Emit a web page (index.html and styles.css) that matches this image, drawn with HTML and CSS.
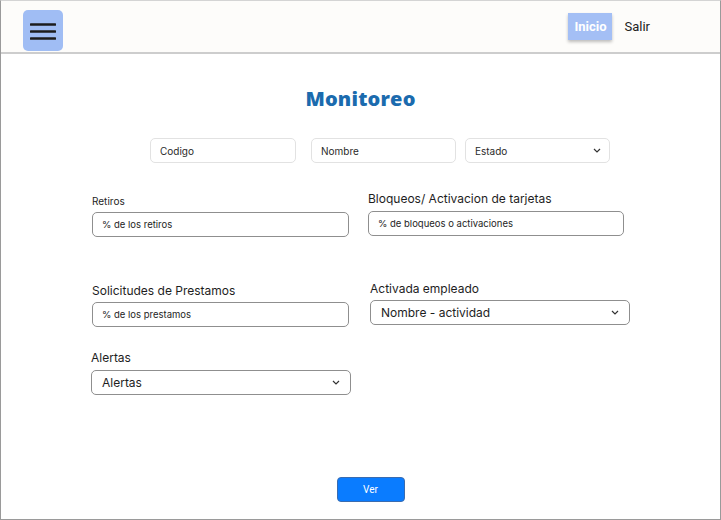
FILE: index.html
```html
<!DOCTYPE html>
<html lang="es">
<head>
<meta charset="utf-8">
<title>Monitoreo</title>
<link rel="stylesheet" href="styles.css">
</head>
<body>
<div class="frame">
  <header class="topbar">
    <button class="menu-btn" aria-label="Menú">
      <svg width="26" height="18" viewBox="0 0 26 18"><path d="M1 2.5h24M1 9.5h24M1 16.5h24" stroke="#1c1c1c" stroke-width="2.6" stroke-linecap="round"/></svg>
    </button>
    <nav class="nav">
      <a class="nav-active">Inicio</a>
      <a class="nav-link">Salir</a>
    </nav>
  </header>

  <main class="content">
    <h1 class="title">Monitoreo</h1>

    <div class="filters">
      <input class="filter f-codigo" placeholder="Codigo">
      <input class="filter f-nombre" placeholder="Nombre">
      <div class="filter f-estado"><span>Estado</span>
        <svg class="chev" width="8" height="5" viewBox="0 0 8 5"><path d="M1 1l3 3 3-3" fill="none" stroke="#333" stroke-width="1.2"/></svg>
      </div>
    </div>

    <div class="grid">
      <div class="field g-retiros">
        <label class="lbl small">Retiros</label>
        <input class="box" placeholder="% de los retiros">
      </div>
      <div class="field g-bloqueos">
        <label class="lbl">Bloqueos/ Activacion de tarjetas</label>
        <input class="box" placeholder="% de bloqueos o activaciones">
      </div>
      <div class="field g-prest">
        <label class="lbl">Solicitudes de Prestamos</label>
        <input class="box" placeholder="% de los prestamos">
      </div>
      <div class="field g-activ">
        <label class="lbl">Activada empleado</label>
        <div class="box sel"><span>Nombre - actividad</span>
          <svg class="chev" width="8" height="5" viewBox="0 0 8 5"><path d="M1 1l3 3 3-3" fill="none" stroke="#333" stroke-width="1.2"/></svg>
        </div>
      </div>
      <div class="field g-alertas">
        <label class="lbl">Alertas</label>
        <div class="box sel"><span>Alertas</span>
          <svg class="chev" width="8" height="5" viewBox="0 0 8 5"><path d="M1 1l3 3 3-3" fill="none" stroke="#333" stroke-width="1.2"/></svg>
        </div>
      </div>
    </div>

    <div class="actions">
      <button class="ver">Ver</button>
    </div>
  </main>
</div>
</body>
</html>
```

FILE: styles.css
```css
* { box-sizing: border-box; }
html, body { margin: 0; padding: 0; background: #fff; }
body { font-family: Inter, "Noto Sans", sans-serif; color: #1e1e1e; }

.frame {
  width: 721px;
  height: 520px;
  border: 1px solid #9a9a9a;
  border-top-color: #d4d4d4;
  background: #fff;
  display: flex;
  flex-direction: column;
}

.topbar {
  height: 53px;
  flex: none;
  background: #fdfcfa;
  border-bottom: 2px solid #cdcdcd;
  display: flex;
  align-items: flex-start;
  justify-content: space-between;
  padding: 9px 0 0 22px;
}
.menu-btn {
  width: 40px;
  height: 41px;
  border: none;
  border-radius: 5px;
  background: #a0bdf4;
  display: flex;
  align-items: center;
  justify-content: center;
  padding: 0;
}
.nav {
  display: flex;
  align-items: center;
  margin-top: 3px;
  margin-right: 70px;
  gap: 12px;
}
.nav-active {
  width: 44px;
  height: 27px;
  background: #a4bff5;
  color: #fff;
  font-family: Roboto, "Liberation Sans", sans-serif;
  font-weight: 700;
  font-size: 13px;
  display: flex;
  align-items: center;
  justify-content: center;
  box-shadow: 0 2px 3px rgba(0,0,0,0.25);
}
.nav-link {
  font-family: Roboto, "Liberation Sans", sans-serif;
  font-size: 13px;
  color: #222;
}

.content {
  flex: 1;
  display: flex;
  flex-direction: column;
}
.title {
  margin: 33px 0 0 0;
  text-align: center;
  font-family: "Open Sans", sans-serif;
  font-weight: 800;
  font-size: 20px;
  line-height: 24px;
  color: #1b6bae;
  letter-spacing: 0.2px;
}

.filters {
  display: flex;
  margin: 27px 0 0 149px;
}
.filter {
  height: 25px;
  border: 1px solid #e2e2e2;
  border-radius: 5px;
  background: #fff;
  font-family: Inter, sans-serif;
  font-size: 10px;
  color: #2a2a2a;
  padding: 0 9px;
  display: flex;
  align-items: center;
  outline: none;
}
.filter::placeholder { color: #2a2a2a; }
.f-codigo { width: 146px; }
.f-nombre { width: 145px; margin-left: 15px; }
.f-estado { width: 145px; margin-left: 9px; justify-content: space-between; padding-right: 8px; }

.grid {
  display: grid;
  grid-template-columns: 260px 262px;
  column-gap: 17px;
  margin: 0 0 0 90px;
}
.field { display: flex; flex-direction: column; }
.lbl {
  font-size: 12px;
  color: #1e1e1e;
  line-height: 16px;
  margin-bottom: 3px;
}
.lbl.small { font-size: 10px; line-height: 12px; margin-bottom: 5px; }
.box {
  height: 25px;
  border: 1px solid #8f8f8f;
  border-radius: 5px;
  background: #fff;
  font-family: Inter, sans-serif;
  font-size: 9.5px;
  color: #1e1e1e;
  padding: 0 9px;
  outline: none;
}
.box::placeholder { color: #1e1e1e; }
.sel {
  display: flex;
  align-items: center;
  justify-content: space-between;
  font-size: 12px;
  padding: 0 10px 0 10px;
}

.g-retiros { margin-top: 32px; margin-left: 1px; width: 257px; }
.g-bloqueos { margin-top: 28px; width: 256px; }
.g-bloqueos .lbl { margin-bottom: 4px; }
.g-prest { margin-top: 46px; margin-left: 1px; width: 257px; }
.g-activ { margin-top: 44px; margin-left: 2px; width: 260px; }
.g-alertas { margin-top: 23px; width: 260px; }
.g-alertas .lbl { margin-bottom: 4px; }

.actions {
  display: flex;
  justify-content: center;
  margin-top: auto;
  margin-bottom: 17px;
  padding-left: 20px;
}
.ver {
  width: 68px;
  height: 25px;
  background: #0a7cff;
  border: 1px solid #3a6cb0;
  border-radius: 4px;
  color: #fff;
  font-family: Roboto, "Liberation Sans", sans-serif;
  font-size: 10px;
}
```
